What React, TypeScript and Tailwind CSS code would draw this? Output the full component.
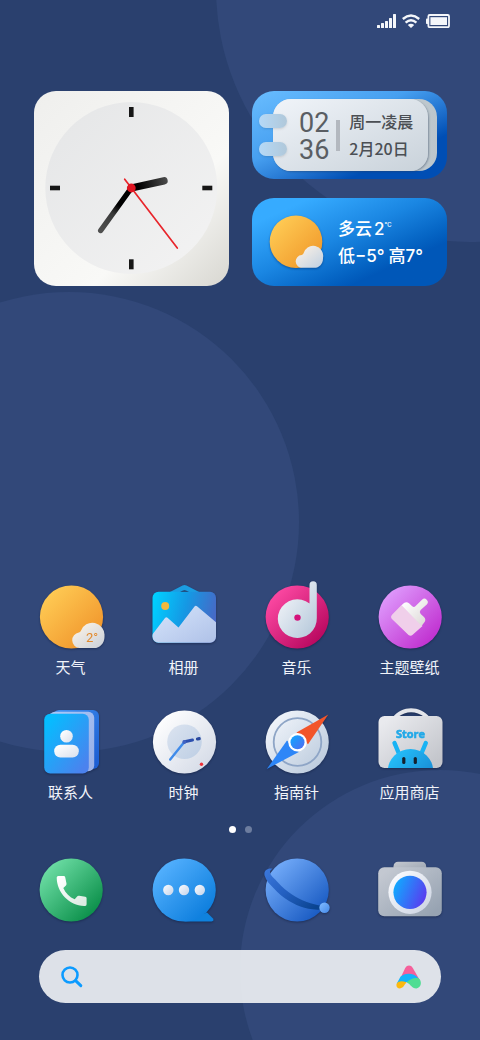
import React, { useState } from "react";

interface AppItem {
  id: string;
  label: string;
  icon: React.ReactNode;
}

interface GradientProps {
  id: string;
  from: string;
  to: string;
}

function Gradient({ id, from, to }: GradientProps) {
  return (
    <linearGradient id={id} x1="0.1" y1="0.1" x2="0.9" y2="0.9">
      <stop offset="0" stopColor={from} />
      <stop offset="1" stopColor={to} />
    </linearGradient>
  );
}

function IconFrame({ children }: { children: React.ReactNode }) {
  return (
    <svg viewBox="0 0 72 72" className="h-[72px] w-[72px] overflow-visible drop-shadow-[0_1px_1px_rgba(10,20,50,0.45)]" aria-hidden="true">
      {children}
    </svg>
  );
}

function WeatherIcon() {
  return (
    <IconFrame>
      <defs>
        <Gradient id="weather-sun" from="#ffcc55" to="#f0932a" />
        <Gradient id="weather-cloud" from="#fbf3e8" to="#cfd3da" />
      </defs>
      <circle cx="36.5" cy="36" r="31.6" fill="url(#weather-sun)" />
      <path d="M44.5 67a7.8 7.8 0 0 1-.6-15.5 3 3 0 0 0 1.9-1.5A12.2 12.2 0 0 1 69.5 55c.3 6.8-4.3 12-10.5 12z" fill="url(#weather-cloud)" />
      <text x="51" y="61" fontSize="13" fill="#e28a2d" className="font-['Roboto',sans-serif]">2°</text>
    </IconFrame>
  );
}

function AlbumIcon() {
  return (
    <IconFrame>
      <defs>
        <linearGradient id="album-sky" x1="0" y1="0.3" x2="1" y2="0.5">
          <stop offset="0" stopColor="#00cfff" />
          <stop offset="0.5" stopColor="#1598e4" />
          <stop offset="1" stopColor="#4a66c4" />
        </linearGradient>
        <Gradient id="album-hill" from="#d3e2fa" to="#b2c4e9" />
        <clipPath id="album-clip">
          <rect x="4.5" y="10.7" width="63.5" height="51" rx="6" />
        </clipPath>
      </defs>
      <path d="M20 12 34.5 4.5q2-1 4 0L53 12H43l-4.5-2.200q-2-1-4 0L30 12z" fill="#1b9de2" />
      <g clipPath="url(#album-clip)">
        <rect x="4" y="10" width="65" height="53" fill="url(#album-sky)" />
        <circle cx="17.2" cy="25" r="4" fill="#f0b93c" />
        <path d="M4 54 17 37q1.200-1.400 2.500-.3L30.500 46.500 46.500 25.500q1.200-1.300 2.500-.2L69 42V63H4z" fill="url(#album-hill)" />
      </g>
    </IconFrame>
  );
}

function MusicIcon() {
  return (
    <IconFrame>
      <defs>
        <Gradient id="music-bg" from="#ff4ba5" to="#b5055c" />
        <Gradient id="music-disc" from="#f4f6fa" to="#b9cbdc" />
      </defs>
      <circle cx="36.2" cy="36" r="31.6" fill="url(#music-bg)" />
      <path d="M48.5 22.6V4a3.65 3.65 0 0 1 7.3 0V37a19.5 19.3 0 1 1-7.3-14.4z" fill="url(#music-disc)" />
      <circle cx="36.5" cy="36.6" r="3.2" fill="#d4127b" />
    </IconFrame>
  );
}

function ThemeIcon() {
  return (
    <IconFrame>
      <defs>
        <Gradient id="theme-bg" from="#df9dfd" to="#bf2bce" />
        <Gradient id="theme-brush" from="#ffffff" to="#dedad8" />
      </defs>
      <circle cx="36.2" cy="36" r="31.6" fill="url(#theme-bg)" />
      <path d="M27.5 24 18 33.8q-2 2.3.2 4.5L34.5 54q2.2 1.7 4.2-.2L48.5 45z" fill="#f0cfea" />
      <path d="M27.5 24.2 30 22q2.6-1.7 5 .3l3.2 3q1.8 1.4 3.4-.2l6.4-6.3a3.3 3.3 0 0 1 4.8 4.6L46.6 29q-1.7 2 .1 3.9l3.3 3.2q2.4 2.6.4 5.2L47.5 45z" fill="url(#theme-brush)" />
    </IconFrame>
  );
}

function ContactsIcon() {
  return (
    <IconFrame>
      <defs>
        <Gradient id="contacts-front" from="#05bdff" to="#4b82ee" />
        <Gradient id="contacts-back" from="#3f8ff0" to="#1d5fd3" />
        <Gradient id="contacts-mid" from="#a9c6f7" to="#99b1e8" />
        <Gradient id="contacts-person" from="#ffffff" to="#dde3ee" />
      </defs>
      <rect x="18" y="4" width="46" height="59" rx="6" fill="url(#contacts-back)" />
      <rect x="14" y="5.8" width="45.2" height="59.5" rx="6" fill="url(#contacts-mid)" />
      <rect x="9.2" y="7.7" width="44.6" height="59.8" rx="6" fill="url(#contacts-front)" />
      <circle cx="31.5" cy="30.3" r="6.3" fill="url(#contacts-person)" />
      <rect x="19.2" y="38.7" width="24.6" height="12.8" rx="6.2" fill="url(#contacts-person)" />
    </IconFrame>
  );
}

function ClockIcon() {
  return (
    <IconFrame>
      <defs>
        <Gradient id="clock-bg" from="#ffffff" to="#d5dbe7" />
        <Gradient id="clock-inner" from="#d9e2ef" to="#c0d0e5" />
      </defs>
      <circle cx="36.5" cy="36" r="31.6" fill="url(#clock-bg)" />
      <circle cx="36.5" cy="35.8" r="17.3" fill="url(#clock-inner)" />
      <path d="M36.5 35.8 22.2 53.5" stroke="#3f8bea" strokeWidth="2.4" strokeLinecap="round" />
      <path d="M36.5 35.8 44.5 34" stroke="#2c4fae" strokeWidth="3" strokeLinecap="round" />
      <path d="M49.5 33 51.2 32.7" stroke="#27479e" strokeWidth="3.2" strokeLinecap="round" />
      <circle cx="36.3" cy="36" r="2" fill="#3f62c2" />
      <circle cx="53.5" cy="58.3" r="1.7" fill="#ee3038" />
    </IconFrame>
  );
}

function CompassIcon() {
  return (
    <IconFrame>
      <defs>
        <Gradient id="compass-bg" from="#f1f5fb" to="#bccbdd" />
        <Gradient id="compass-core" from="#13a4ff" to="#4c70f2" />
      </defs>
      <circle cx="36.2" cy="36" r="31.6" fill="url(#compass-bg)" />
      <circle cx="36.5" cy="36" r="23.8" fill="none" stroke="#8ea5c6" strokeWidth="1.8" />
      <path d="M67.3 8.6 35.5 26.5 47 38.3z" fill="#f2552a" />
      <path d="M5.8 63 26 34.5 37.8 46z" fill="#2d86f7" />
      <circle cx="36.5" cy="36.2" r="9.2" fill="#ffffff" />
      <circle cx="36.5" cy="36.2" r="7" fill="url(#compass-core)" />
    </IconFrame>
  );
}

function StoreIcon() {
  return (
    <IconFrame>
      <defs>
        <Gradient id="store-bag" from="#e9eaee" to="#c3c5cb" />
        <Gradient id="store-robot" from="#25c0fb" to="#1681cd" />
        <clipPath id="store-clip">
          <rect x="4" y="10" width="65" height="52" rx="6" />
        </clipPath>
      </defs>
      <path d="M19 11C28-.6 46-.6 55.5 11H50.5C42 4.6 32 4.6 24 11z" fill="#e3e5ea" />
      <rect x="4.5" y="10" width="64" height="52" rx="6" fill="url(#store-bag)" />
      <text x="36.5" y="32" fontSize="11" fontWeight="700" textAnchor="middle" fill="#22a9e8" stroke="#22a9e8" strokeWidth="0.6" strokeLinejoin="round" className="font-['Open_Sans',sans-serif]">Store</text>
      <g clipPath="url(#store-clip)">
        <path d="M20.5 37 25.5 49M51.8 37 46.8 49" stroke="#18b3f4" strokeWidth="4.4" strokeLinecap="round" />
        <ellipse cx="36.5" cy="65" rx="22.7" ry="22" fill="url(#store-robot)" />
      </g>
      <rect x="28.2" y="51" width="3.2" height="7" rx="1.6" fill="#14202e" />
      <rect x="39.7" y="51" width="3.2" height="7" rx="1.6" fill="#14202e" />
    </IconFrame>
  );
}

function PhoneIcon() {
  return (
    <IconFrame>
      <defs>
        <Gradient id="phone-bg" from="#70e0a8" to="#078c46" />
        <Gradient id="phone-set" from="#ffffff" to="#dcebe2" />
      </defs>
      <circle cx="36.2" cy="36" r="31.6" fill="url(#phone-bg)" />
      <path d="M23.3 22h5.4q1.3 0 1.5 1.3l1.3 6.2q.2 1.3-.8 2.2L28.3 34c2.3 5.3 6.3 9.2 11.4 11.3l2.2-2.6q.9-1.1 2.2-.9l6.2.9q1.3.2 1.3 1.6v6q0 1.5-1.5 1.6C34.5 52.4 21.8 38.8 21.7 23.6q0-1.5 1.6-1.6z" fill="url(#phone-set)" />
    </IconFrame>
  );
}

function MessageIcon() {
  return (
    <IconFrame>
      <defs>
        <Gradient id="message-bg" from="#56b2ff" to="#0a7cdc" />
        <Gradient id="message-dot" from="#f5f8fd" to="#c9d7ec" />
      </defs>
      <path d="M59 58.5 65 64.6q1.5 2.6-1.5 2.9H36z" fill="#0f82de" />
      <circle cx="36.2" cy="36" r="31.6" fill="url(#message-bg)" />
      <circle cx="20.3" cy="36" r="5.2" fill="url(#message-dot)" />
      <circle cx="36" cy="36" r="5.2" fill="url(#message-dot)" />
      <circle cx="51.8" cy="36" r="5.2" fill="url(#message-dot)" />
    </IconFrame>
  );
}

function BrowserIcon() {
  return (
    <IconFrame>
      <defs>
        <Gradient id="browser-bg" from="#76aefb" to="#1557c0" />
        <linearGradient id="browser-orbit" x1="0" y1="0" x2="1" y2="0.8">
          <stop offset="0" stopColor="#3c78dc" />
          <stop offset="0.5" stopColor="#235fc0" />
          <stop offset="1" stopColor="#0a4490" />
        </linearGradient>
        <Gradient id="browser-moon" from="#7db8ff" to="#4a8eeb" />
      </defs>
      <circle cx="36.2" cy="36" r="31.6" fill="url(#browser-bg)" />
      <path d="M11.5 14.8C6 13.8 2.5 17.2 3.6 21.5 5 26.5 8.5 30 12.5 34 17 39 22.5 43.8 28 47 38 53 48 55.8 61 56V51.6C51 50.8 40.5 46.5 31 40.5 25.5 37 21.5 33.5 17 28.5 13.5 24.5 9 21 9 18.5 9 16.800 10 15.600 11.500 14.800z" fill="url(#browser-orbit)" />
      <circle cx="63.5" cy="53.7" r="5.2" fill="url(#browser-moon)" />
    </IconFrame>
  );
}

function CameraIcon() {
  return (
    <IconFrame>
      <defs>
        <Gradient id="camera-body" from="#c3c8d1" to="#97a3b2" />
        <Gradient id="camera-top" from="#c0c5cd" to="#9ba4b1" />
        <Gradient id="camera-ring" from="#fafbfe" to="#ced5e3" />
        <linearGradient id="camera-lens" x1="0" y1="0.3" x2="1" y2="0.7">
          <stop offset="0" stopColor="#0fabff" />
          <stop offset="1" stopColor="#5c38ef" />
        </linearGradient>
      </defs>
      <rect x="19.5" y="7.7" width="32.7" height="12" rx="4.5" fill="url(#camera-top)" />
      <rect x="4.2" y="13.3" width="63.6" height="49" rx="6" fill="url(#camera-body)" />
      <circle cx="36" cy="38.3" r="21.6" fill="url(#camera-ring)" />
      <circle cx="36" cy="38.3" r="16.6" fill="url(#camera-lens)" />
    </IconFrame>
  );
}

const APPS: AppItem[] = [
  { id: "weather", label: "天气", icon: <WeatherIcon /> },
  { id: "album", label: "相册", icon: <AlbumIcon /> },
  { id: "music", label: "音乐", icon: <MusicIcon /> },
  { id: "theme", label: "主题壁纸", icon: <ThemeIcon /> },
  { id: "contacts", label: "联系人", icon: <ContactsIcon /> },
  { id: "clock", label: "时钟", icon: <ClockIcon /> },
  { id: "compass", label: "指南针", icon: <CompassIcon /> },
  { id: "store", label: "应用商店", icon: <StoreIcon /> },
];

const DOCK: AppItem[] = [
  { id: "phone", label: "电话", icon: <PhoneIcon /> },
  { id: "message", label: "短信", icon: <MessageIcon /> },
  { id: "browser", label: "浏览器", icon: <BrowserIcon /> },
  { id: "camera", label: "相机", icon: <CameraIcon /> },
];

function Wallpaper() {
  return (
    <svg viewBox="0 0 480 1040" preserveAspectRatio="xMidYMid slice" className="absolute inset-0 -z-10 h-full w-full" aria-hidden="true">
      <g fill="#324879">
        <circle cx="470" cy="-12" r="254" />
        <circle cx="69" cy="522" r="230" />
        <circle cx="440" cy="970" r="200" />
      </g>
    </svg>
  );
}

function StatusBar() {
  return (
    <header className="flex h-7 items-end justify-end gap-[6px] pr-[30px]">
      <svg viewBox="0 0 19 14" className="h-[14px] w-[19px]" fill="#f4f6fa" role="img" aria-label="信号">
        <rect x="0" y="11" width="3" height="3" rx="0.5" />
        <rect x="4" y="9" width="3" height="5" rx="0.5" />
        <rect x="8" y="7" width="3" height="7" rx="0.5" />
        <rect x="12" y="4" width="3" height="10" rx="0.5" />
        <rect x="16" y="0" width="3" height="14" rx="0.5" />
      </svg>
      <svg viewBox="0 0 18 14" className="h-[14px] w-[18px]" fill="none" stroke="#f4f6fa" strokeWidth="2.4" role="img" aria-label="无线网络">
        <path d="M.8 5Q9-1.8 17.2 5" />
        <path d="M3.6 8.600Q9 3.800 14.400 8.600" />
        <path d="M5.8 11Q9 8.400 12.200 11L9 14z" fill="#f4f6fa" stroke="none" />
      </svg>
      <svg viewBox="0 0 24 14" className="h-[14px] w-[24px]" role="img" aria-label="电量">
        <rect x="0" y="4.5" width="2.4" height="5.5" rx="0.8" fill="#f4f6fa" />
        <rect x="2.4" y="1" width="20.6" height="12.2" rx="1.2" fill="none" stroke="#f4f6fa" strokeWidth="1.8" />
        <rect x="4.4" y="3.2" width="16.6" height="7.8" fill="#f4f6fa" />
      </svg>
    </header>
  );
}

function ClockWidget() {
  return (
    <div className="aspect-square overflow-hidden rounded-[22px] bg-linear-to-br from-[#efefed] via-[#f9f9f7] via-65% to-[#d8d7d1]">
      <svg viewBox="0 0 195 195" className="h-full w-full" role="img" aria-label="02:36">
        <defs>
          <Gradient id="face" from="#e6e7e8" to="#f2f2f2" />
          <linearGradient id="hour-hand" gradientUnits="userSpaceOnUse" x1="97" y1="97" x2="133" y2="89">
            <stop offset="0.2" stopColor="#000000" />
            <stop offset="1" stopColor="#4a4a4a" />
          </linearGradient>
          <linearGradient id="minute-hand" gradientUnits="userSpaceOnUse" x1="97" y1="97" x2="67" y2="140">
            <stop offset="0.4" stopColor="#000000" />
            <stop offset="0.6" stopColor="#3a3a3a" />
            <stop offset="1" stopColor="#505050" />
          </linearGradient>
        </defs>
        <circle cx="97.3" cy="97" r="86" fill="url(#face)" />
        <g fill="#161616">
          <rect x="95" y="16" width="4.6" height="10" />
          <rect x="95" y="168.3" width="4.6" height="10" />
          <rect x="16" y="94.7" width="10" height="4.6" />
          <rect x="168.3" y="94.7" width="10" height="4.6" />
        </g>
        <path d="M97.3 97 130 89.8" stroke="url(#hour-hand)" strokeWidth="7.4" strokeLinecap="round" />
        <path d="M97.3 97 66.7 139.5" stroke="url(#minute-hand)" strokeWidth="5.4" strokeLinecap="round" />
        <path d="M90.7 88.2 143.3 157" stroke="#e8262c" strokeWidth="1.7" strokeLinecap="round" />
        <circle cx="97.3" cy="97" r="4.4" fill="#e01522" />
      </svg>
    </div>
  );
}

function DateWidget() {
  return (
    <div className="relative h-[88px] rounded-[22px] bg-linear-to-br from-[#69bdff] via-[#469ff0] via-40% to-[#004eb4] to-75% pt-2 pr-[10px] pb-2 pl-[21px]">
      <div className="h-full rounded-[18px] bg-linear-to-r from-[#d5dde4] to-[#bcc6cc] pr-[9px]">
        <div className="flex h-full items-center rounded-[18px] bg-linear-to-br from-[#f0f4f9] to-[#c9d2da] pl-[26px] shadow-[1px_1px_2px_rgba(40,60,90,0.4)]">
          <p className="pt-[3px] font-['Roboto',sans-serif] text-[27px] leading-[27px] text-[#5a5e63]">
            02
            <br />
            36
          </p>
          <div className="mr-[9px] ml-[7px] h-[31px] w-1 bg-[#b3b8bf]" />
          <div className="text-base leading-[27px] font-medium whitespace-nowrap text-[#4b4f54]">
            <p>周一凌晨</p>
            <p>2月20日</p>
          </div>
        </div>
      </div>
      <div className="absolute top-[23px] left-[7px] h-[14px] w-7 rounded-full bg-linear-to-r from-[#b5d9f7] to-[#b0c8da] shadow-sm" />
      <div className="absolute top-[51px] left-[7px] h-[14px] w-7 rounded-full bg-linear-to-r from-[#b5d9f7] to-[#b0c8da] shadow-sm" />
    </div>
  );
}

function WeatherWidget() {
  return (
    <div className="flex h-[88px] items-center rounded-[22px] bg-linear-to-br from-[#36abff] from-15% via-[#1a86e2] via-45% to-[#0057b8] to-75% pl-4 text-white">
      <svg viewBox="0 0 56 56" className="h-14 w-14 shrink-0 overflow-visible drop-shadow-[0_1px_1px_rgba(0,40,100,0.5)]" aria-hidden="true">
        <defs>
          <Gradient id="widget-sun" from="#ffcc55" to="#f0982a" />
          <Gradient id="widget-cloud" from="#fbf1e6" to="#c5d3e2" />
        </defs>
        <circle cx="28" cy="27.7" r="26.3" fill="url(#widget-sun)" />
        <path d="M34.5 53.8a6.4 6.4 0 0 1-.8-12.8 2.6 2.6 0 0 0 1.6-1.2A9.9 9.9 0 0 1 55 44c.2 5.6-3.6 9.8-8.7 9.8z" fill="url(#widget-cloud)" />
      </svg>
      <div className="ml-[14px] pt-[2px] font-['Inter','Noto_Sans_CJK_SC',sans-serif] text-[17px] leading-[27px] font-medium whitespace-nowrap">
        <p className="flex gap-0.5">
          <span>多云</span>
          <span className="flex items-start">
            2<span className="text-[6px] leading-[18px]">℃</span>
          </span>
        </p>
        <p className="flex gap-1">
          <span>低−5°</span>
          <span>高7°</span>
        </p>
      </div>
    </div>
  );
}

function SearchBar() {
  const [query, setQuery] = useState("");

  return (
    <form
      role="search"
      onSubmit={(e) => e.preventDefault()}
      className="mx-[39px] mt-6 flex h-[53px] items-center rounded-full bg-[#f1f3f5]/90 pr-[19px] pl-[22px]"
    >
      <button type="submit" aria-label="搜索" className="cursor-pointer">
        <svg viewBox="0 0 22 22" className="h-[22px] w-[22px]" fill="none" stroke="#0c9bff" strokeWidth="2.6" strokeLinecap="round" aria-hidden="true">
          <circle cx="9" cy="9" r="7.5" />
          <path d="M14.6 14.6 19.8 19.6" strokeWidth="3" />
        </svg>
      </button>
      <input
        type="text"
        aria-label="搜索内容"
        value={query}
        onChange={(e) => setQuery(e.target.value)}
        className="min-w-0 flex-1 bg-transparent px-3 text-base text-[#2a406e] outline-none"
      />
      <button type="button" aria-label="语音助手" className="cursor-pointer">
        <svg viewBox="0 0 26 24" className="h-6 w-[26px]" aria-hidden="true">
          <path d="M9.2 3Q10.6.6 13 .6T16.8 3L24 15.5 5 12z" fill="#f5609b" />
          <path d="M.8 18.5 4.6 11.500C8.500 8 17.500 7 22.500 13.500L15 18 10.500 17 4 21z" fill="#14b4fb" />
          <path d="M.8 18.5C2.5 15.800 6 15.800 10.600 17.300 8.500 19.500 7.500 23.200 4 23.400 1 23.500-.3 20.800.8 18.500z" fill="#fdb90f" />
          <path d="M10.6 17.3C14 14 18.500 12.200 22.700 13.300 26 16 25.800 22.500 20.500 23.400 15.500 23.500 15 19.500 10.600 17.300z" fill="#50dd93" />
        </svg>
      </button>
    </form>
  );
}

export default function App() {
  return (
    <div className="relative isolate flex min-h-screen flex-col overflow-hidden bg-[#2a406e] pb-[37px] font-['Noto_Sans_CJK_SC',sans-serif]">
      <Wallpaper />
      <StatusBar />

      <section className="mt-[63px] grid grid-cols-2 gap-[23px] pr-[33px] pl-[34px]">
        <ClockWidget />
        <div className="flex flex-col justify-between">
          <DateWidget />
          <WeatherWidget />
        </div>
      </section>

      <main className="mt-auto grid grid-cols-4 gap-y-[29px] px-[14px]">
        {APPS.map((app) => (
          <button key={app.id} type="button" className="flex cursor-pointer flex-col items-center gap-1">
            {app.icon}
            <span className="text-[15px] leading-5 whitespace-nowrap text-[#f1f4fa]">{app.label}</span>
          </button>
        ))}
      </main>

      <div className="mt-6 flex justify-center gap-[9px]">
        <span className="h-[7px] w-[7px] rounded-full bg-white" />
        <span className="h-[7px] w-[7px] rounded-full bg-[#6d7d9f]" />
      </div>

      <nav className="mt-[21px] grid grid-cols-4 px-[14px]">
        {DOCK.map((app) => (
          <button key={app.id} type="button" aria-label={app.label} className="flex cursor-pointer justify-center">
            {app.icon}
          </button>
        ))}
      </nav>

      <SearchBar />
    </div>
  );
}
